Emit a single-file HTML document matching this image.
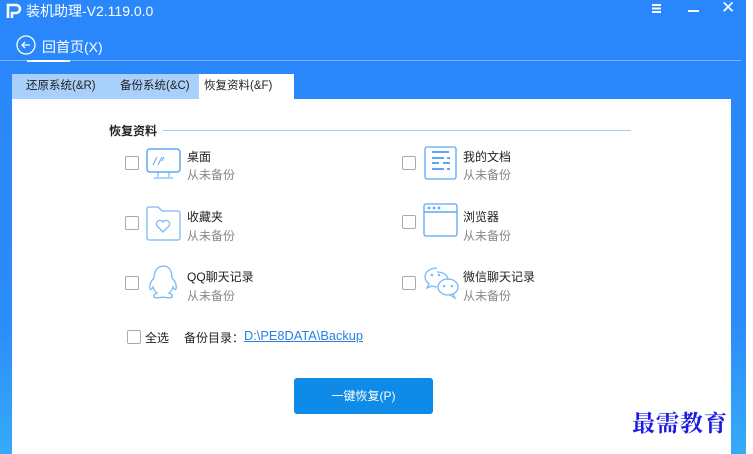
<!DOCTYPE html>
<html><head><meta charset="utf-8"><style>
*{margin:0;padding:0;box-sizing:border-box}
body{width:753px;height:454px;overflow:hidden;background:#fff;font-family:"Liberation Sans","Noto Sans CJK SC",sans-serif;position:relative}
.win{position:absolute;left:0;top:0;width:746px;height:454px;background:linear-gradient(180deg,#2a86fb 0%,#2b8cfb 70%,#35aafa 100%)}
.t{position:absolute;color:#fff}
.panel{position:absolute;left:12px;top:99px;width:719px;height:355px;background:#fff}
.tabs{position:absolute;left:12px;top:74px;width:282px;height:25px;background:#a9d0fb}
.tab{position:absolute;top:0;height:25px;line-height:24px;font-size:11.5px;color:#222}
.cb{position:absolute;width:14px;height:14px;border:1px solid #aaa;border-radius:2px;background:#fff}
.n{position:absolute;font-size:12px;color:#222}
.s{position:absolute;font-size:12px;color:#888}
svg{position:absolute}
</style></head><body>
<div class="win">
 <svg style="left:5px;top:2px" width="18" height="18" viewBox="0 0 18 18"><path d="M3 16V3h8a4 4 0 0 1 0 8H7v5" fill="none" stroke="#fff" stroke-width="2.6"/></svg>
 <div class="t" style="left:26px;top:1px;font-size:14px">装机助理-V2.119.0.0</div>
 <div style="position:absolute;left:652px;top:4px;width:9px;height:1.5px;background:#fff;box-shadow:0 3.5px #fff,0 7px #fff"></div>
 <div style="position:absolute;left:688px;top:10px;width:11px;height:2px;background:#fff"></div>
 <div class="t" style="left:721px;top:-2px;font-size:17px">✕</div>
 <svg style="left:16px;top:35px" width="20" height="20" viewBox="0 0 20 20"><circle cx="10" cy="10" r="9" fill="none" stroke="#fff" stroke-width="1.3"/><path d="M14 10H6M9 7l-3 3 3 3" fill="none" stroke="#fff" stroke-width="1.3"/></svg>
 <div class="t" style="left:42px;top:37px;font-size:14px">回首页(X)</div>
 <div style="position:absolute;left:0;top:60px;width:741px;height:1px;background:#7eb6fb"></div>
 <div style="position:absolute;left:27px;top:60px;width:43px;height:2px;background:#fff"></div>
 <div class="tabs">
  <div class="tab" style="left:14px">还原系统(&amp;R)</div>
  <div class="tab" style="left:108px">备份系统(&amp;C)</div>
  <div class="tab" style="left:187px;width:95px;background:#fff;padding-left:5px">恢复资料(&amp;F)</div>
 </div>
 <div class="panel"></div>
</div>
<div style="position:absolute;left:109px;top:122px;font-size:12px;font-weight:bold;color:#222">恢复资料</div>
<div style="position:absolute;left:163px;top:130px;width:468px;height:1px;background:#9fd0ec"></div>

<div class="cb" style="left:125px;top:156px"></div>
<svg style="left:146px;top:148px" width="35" height="32" viewBox="0 0 35 32"><rect x="1" y="1" width="33" height="23" rx="3" fill="none" stroke="#5aa8f8" stroke-width="1.5"/><path d="M7 17l4-8M12 17l4-8M16 13l2-4M12 24v5M23 24v5M8 30h19" stroke="#5aa8f8" stroke-width="1" fill="none"/></svg>
<div class="n" style="left:187px;top:148px">桌面</div><div class="s" style="left:187px;top:166px">从未备份</div>

<div class="cb" style="left:125px;top:216px"></div>
<svg style="left:146px;top:206px" width="35" height="35" viewBox="0 0 35 35"><path d="M1 3a2 2 0 0 1 2-2h9l4 4h16a2 2 0 0 1 2 2v25a2 2 0 0 1-2 2H3a2 2 0 0 1-2-2z" fill="none" stroke="#7ab8f9" stroke-width="1.3"/><path d="M17 26l-6-6a3.5 3.5 0 0 1 6-4 3.5 3.5 0 0 1 6 4z" fill="none" stroke="#7ab8f9" stroke-width="1.3"/></svg>
<div class="n" style="left:187px;top:208px">收藏夹</div><div class="s" style="left:187px;top:227px">从未备份</div>

<div class="cb" style="left:125px;top:276px"></div>
<svg style="left:147px;top:265px" width="35" height="37" viewBox="0 0 35 37"><path d="M17 1c-8 0-10 7-10 12-3 3-5 7-4 11 1 1 2 0 3-2 1 4 3 5 4 6-3 1-4 3-3 4s5 1 9 0c4 1 8 1 9 0s0-3-3-4c1-1 3-2 4-6 1 2 2 3 3 2 1-4-1-8-4-11 0-5-2-12-8-12z" fill="none" stroke="#7ab8f9" stroke-width="1.3"/></svg>
<div class="n" style="left:187px;top:268px">QQ聊天记录</div><div class="s" style="left:187px;top:287px">从未备份</div>

<div class="cb" style="left:402px;top:156px"></div>
<svg style="left:424px;top:146px" width="33" height="34" viewBox="0 0 33 34"><rect x="1" y="1" width="31" height="32" rx="2" fill="none" stroke="#5aa8f8" stroke-width="1.3"/><path d="M8 6h17M8 12h12M23 12h3M8 17h7M19 17h7M8 23h12M23 23h3" stroke="#5aa8f8" stroke-width="2"/></svg>
<div class="n" style="left:463px;top:148px">我的文档</div><div class="s" style="left:463px;top:166px">从未备份</div>

<div class="cb" style="left:402px;top:215px"></div>
<svg style="left:423px;top:203px" width="35" height="34" viewBox="0 0 35 34"><rect x="1" y="1" width="33" height="32" rx="2" fill="none" stroke="#5aa8f8" stroke-width="1.3"/><path d="M1 9h33" stroke="#5aa8f8" stroke-width="1.6"/><circle cx="6" cy="5" r="1.4" fill="#5aa8f8"/><circle cx="11" cy="5" r="1.4" fill="#5aa8f8"/><circle cx="16" cy="5" r="1.4" fill="#5aa8f8"/></svg>
<div class="n" style="left:463px;top:208px">浏览器</div><div class="s" style="left:463px;top:227px">从未备份</div>

<div class="cb" style="left:402px;top:276px"></div>
<svg style="left:424px;top:267px" width="35" height="32" viewBox="0 0 35 32"><path d="M13 1C6 1 1 5 1 10c0 3 2 5 4 7l-2 4 5-2c2 1 3 1 5 1" fill="none" stroke="#7ab8f9" stroke-width="1.3"/><path d="M13 5c6 0 11 3 11 8" fill="none" stroke="#7ab8f9" stroke-width="1.3"/><ellipse cx="24" cy="20" rx="10" ry="8" fill="none" stroke="#7ab8f9" stroke-width="1.3"/><path d="M29 27l2 4-5-3" fill="none" stroke="#7ab8f9" stroke-width="1.3"/><circle cx="8" cy="8" r="1.3" fill="#7ab8f9"/><circle cx="15" cy="8" r="1.3" fill="#7ab8f9"/><circle cx="20" cy="19" r="1.3" fill="#7ab8f9"/><circle cx="28" cy="19" r="1.3" fill="#7ab8f9"/></svg>
<div class="n" style="left:463px;top:268px">微信聊天记录</div><div class="s" style="left:463px;top:287px">从未备份</div>

<div class="cb" style="left:127px;top:330px"></div>
<div class="n" style="left:145px;top:329px">全选</div>
<div class="n" style="left:184px;top:329px">备份目录：</div>
<div style="position:absolute;left:244px;top:328px;font-size:12.8px;color:#2a7fe0;text-decoration:underline">D:\PE8DATA\Backup</div>
<div style="position:absolute;left:294px;top:378px;width:139px;height:36px;background:#0e8ae8;border-radius:3px;color:#fff;font-size:12px;text-align:center;line-height:36px">一键恢复(P)</div>
<div style="position:absolute;left:632px;top:405px;font-family:'Noto Serif CJK SC',serif;font-size:23px;font-weight:bold;color:#1a1ae0;letter-spacing:1px;text-shadow:0 0 2px #fff">最需教育</div>
</body></html>
